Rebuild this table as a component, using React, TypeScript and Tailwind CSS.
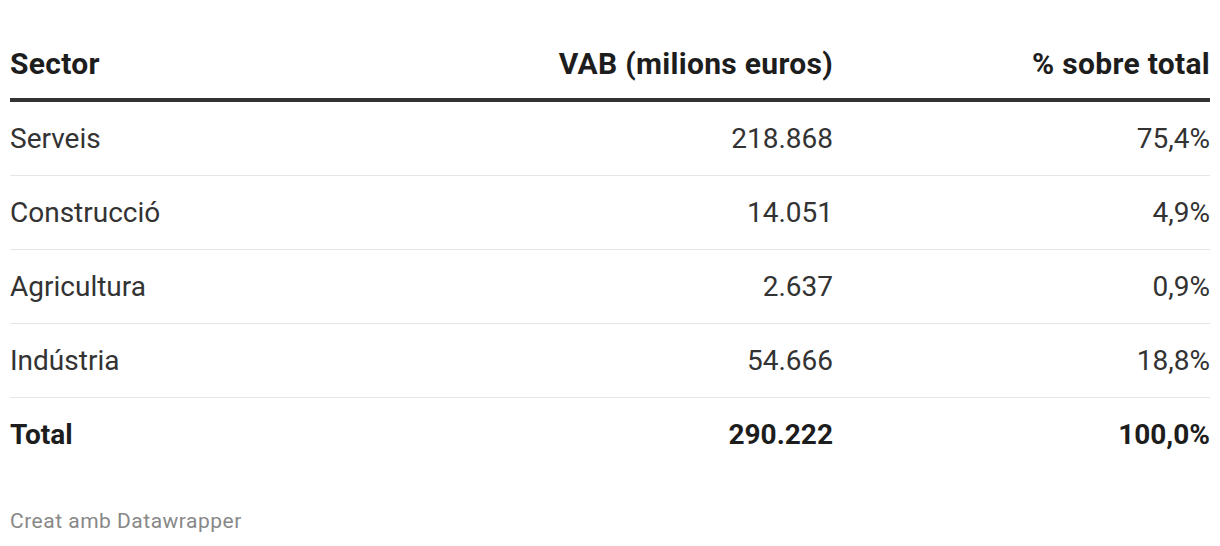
const rows = [
  { sector: "Serveis", vab: "218.868", pct: "75,4%" },
  { sector: "Construcció", vab: "14.051", pct: "4,9%" },
  { sector: "Agricultura", vab: "2.637", pct: "0,9%" },
  { sector: "Indústria", vab: "54.666", pct: "18,8%" },
];

const App = () => {
  return (
    <div className="w-[1220px] h-[546px] bg-white px-[10px] pt-[28px] font-['Roboto',sans-serif] text-[#333]">
      <div className="grid grid-cols-[1fr_400px_377px] h-[74px] items-center border-b-4 border-[#333] text-[30px] tracking-[0.3px] font-bold text-[#1d1d1d]">
        <div>Sector</div>
        <div className="text-right">VAB (milions euros)</div>
        <div className="text-right">% sobre total</div>
      </div>
      {rows.map((row) => (
        <div
          key={row.sector}
          className="grid grid-cols-[1fr_400px_377px] h-[74px] items-center border-b border-[#e6e6e6] text-[28px]"
        >
          <div>{row.sector}</div>
          <div className="text-right">{row.vab}</div>
          <div className="text-right">{row.pct}</div>
        </div>
      ))}
      <div className="grid grid-cols-[1fr_400px_377px] h-[73px] items-center text-[28px] font-bold text-[#1d1d1d]">
        <div>Total</div>
        <div className="text-right">290.222</div>
        <div className="text-right">100,0%</div>
      </div>
      <div className="mt-[35px] text-[21px] leading-[31px] tracking-[0.5px] text-[#888]">Creat amb Datawrapper</div>
    </div>
  );
};

export default App;
